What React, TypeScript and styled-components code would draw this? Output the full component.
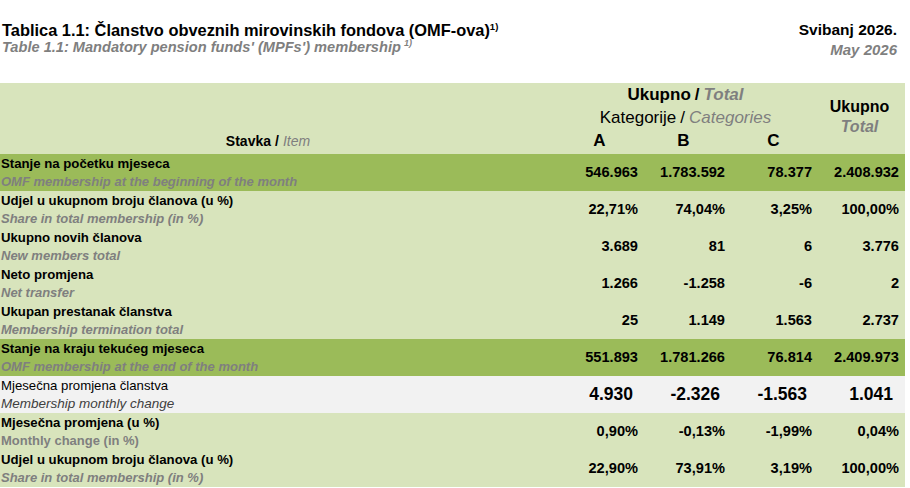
import React from 'react';
import styled, { createGlobalStyle, css } from 'styled-components';

const GlobalStyle = createGlobalStyle`
  html, body {
    margin: 0;
    padding: 0;
    background: #ffffff;
  }
  body {
    font-family: 'Liberation Sans', Arial, sans-serif;
    color: #000;
  }
`;

const LIGHT = '#d8e4bc';
const DARK = '#9bbb59';
const PLAIN = '#f2f2f2';
const GREY = '#7f7f7f';
const COLS = '553px 87px 87px 87px 91px';

const Page = styled.div`
  width: 905px;
  padding-top: 21px;
`;

const TitleBar = styled.div`
  display: flex;
  justify-content: space-between;
  align-items: flex-start;
  padding: 0 8px 0 2px;
  height: 62px;
`;

const TitleBlock = styled.div`
  display: flex;
  flex-direction: column;
`;

const DateBlock = styled.div`
  display: flex;
  flex-direction: column;
  align-items: flex-end;
`;

const MainTitle = styled.div`
  font-size: 16.4px;
  font-weight: bold;
  line-height: 18px;
  sup {
    font-size: 9.5px;
    line-height: 0;
    vertical-align: 6px;
  }
`;

const SubTitle = styled.div`
  font-size: 14.6px;
  font-weight: bold;
  font-style: italic;
  color: ${GREY};
  line-height: 17px;
  sup {
    font-size: 9px;
    line-height: 0;
    vertical-align: 6px;
    margin-left: 3px;
  }
`;

const DateMain = styled.div`
  font-size: 15.5px;
  font-weight: bold;
  line-height: 18px;
`;

const DateSub = styled.div`
  font-size: 15px;
  font-weight: bold;
  font-style: italic;
  color: ${GREY};
  line-height: 20px;
  margin-top: 1px;
`;

const Table = styled.div`
  display: flex;
  flex-direction: column;
`;

const Header = styled.div`
  display: grid;
  grid-template-columns: ${COLS};
  grid-template-rows: 23px 23px 24px;
  height: 71px;
  background: ${LIGHT};
  font-size: 17px;
`;

const GroupTitle = styled.div<{ $bold?: boolean }>`
  grid-column: 2 / 5;
  text-align: center;
  line-height: 23px;
  font-weight: ${({ $bold }) => ($bold ? 'bold' : 'normal')};
  padding-left: 4px;
`;

const TotalHead = styled.div`
  grid-column: 5;
  grid-row: 1 / 4;
  display: flex;
  flex-direction: column;
  justify-content: center;
  align-items: center;
  font-size: 16px;
  font-weight: bold;
  line-height: 20px;
  padding-bottom: 2px;
`;

const ItemHead = styled.div`
  grid-column: 1;
  grid-row: 3;
  text-align: center;
  font-size: 14px;
  font-weight: bold;
  line-height: 24px;
  padding-right: 17px;
`;

const Letter = styled.div<{ $shift: number }>`
  grid-row: 3;
  font-weight: bold;
  text-align: center;
  line-height: 24px;
  padding-left: ${({ $shift }) => $shift}px;
`;

const Muted = styled.span<{ $bold?: boolean }>`
  color: ${GREY};
  font-style: italic;
  font-weight: ${({ $bold }) => ($bold ? 'bold' : 'normal')};
`;

const Slash = styled.span`
  margin: 0 4px;
`;

type Tone = 'dark' | 'light' | 'plain';

const Row = styled.div<{ $tone: Tone }>`
  display: grid;
  grid-template-columns: ${COLS};
  height: 37px;
  background: ${({ $tone }) => ($tone === 'dark' ? DARK : $tone === 'plain' ? PLAIN : LIGHT)};
`;

const LabelCell = styled.div`
  display: flex;
  flex-direction: column;
  padding: 1px 0 0 1px;
`;

const LabelMain = styled.div<{ $plain?: boolean }>`
  font-size: 13.2px;
  line-height: 18px;
  font-weight: ${({ $plain }) => ($plain ? 'normal' : 'bold')};
  white-space: nowrap;
`;

type SubKind = 'italic' | 'upright' | 'light';

const subStyles = {
  italic: css`
    font-style: italic;
    font-weight: bold;
    color: ${GREY};
  `,
  upright: css`
    font-style: normal;
    font-weight: bold;
    color: ${GREY};
  `,
  light: css`
    font-style: italic;
    font-weight: normal;
    color: #404040;
    font-size: 13.5px;
  `,
};

const LabelSub = styled.div<{ $kind: SubKind }>`
  font-size: 13px;
  line-height: 18px;
  white-space: nowrap;
  ${({ $kind }) => subStyles[$kind]}
`;

const NumCell = styled.div<{ $big?: boolean; $last?: boolean }>`
  display: flex;
  align-items: center;
  justify-content: flex-end;
  font-weight: bold;
  white-space: nowrap;
  font-size: ${({ $big }) => ($big ? '17.5px' : '14.6px')};
  padding-right: ${({ $big, $last }) => ($big ? ($last ? 12 : 7) : $last ? 6 : 2)}px;
  padding-bottom: ${({ $big }) => ($big ? 0 : 1)}px;
`;

interface RowData {
  tone: Tone;
  main: string;
  sub: string;
  subKind: SubKind;
  plain?: boolean;
  big?: boolean;
  values: [string, string, string, string];
}

const rows: RowData[] = [
  {
    tone: 'dark',
    main: 'Stanje na početku mjeseca',
    sub: 'OMF membership at the beginning of the month',
    subKind: 'italic',
    values: ['546.963', '1.783.592', '78.377', '2.408.932'],
  },
  {
    tone: 'light',
    main: 'Udjel u ukupnom broju članova (u %)',
    sub: 'Share in total membership (in %)',
    subKind: 'italic',
    values: ['22,71%', '74,04%', '3,25%', '100,00%'],
  },
  {
    tone: 'light',
    main: 'Ukupno novih članova',
    sub: 'New members total',
    subKind: 'italic',
    values: ['3.689', '81', '6', '3.776'],
  },
  {
    tone: 'light',
    main: 'Neto promjena',
    sub: 'Net transfer',
    subKind: 'italic',
    values: ['1.266', '-1.258', '-6', '2'],
  },
  {
    tone: 'light',
    main: 'Ukupan prestanak članstva',
    sub: 'Membership termination total',
    subKind: 'italic',
    values: ['25', '1.149', '1.563', '2.737'],
  },
  {
    tone: 'dark',
    main: 'Stanje na kraju tekućeg mjeseca',
    sub: 'OMF membership at the end of the month',
    subKind: 'italic',
    values: ['551.893', '1.781.266', '76.814', '2.409.973'],
  },
  {
    tone: 'plain',
    main: 'Mjesečna promjena članstva',
    sub: 'Membership monthly change',
    subKind: 'light',
    plain: true,
    big: true,
    values: ['4.930', '-2.326', '-1.563', '1.041'],
  },
  {
    tone: 'light',
    main: 'Mjesečna promjena (u %)',
    sub: 'Monthly change (in %)',
    subKind: 'upright',
    values: ['0,90%', '-0,13%', '-1,99%', '0,04%'],
  },
  {
    tone: 'light',
    main: 'Udjel u ukupnom broju članova (u %)',
    sub: 'Share in total membership (in %)',
    subKind: 'italic',
    values: ['22,90%', '73,91%', '3,19%', '100,00%'],
  },
];

const App: React.FC = () => (
  <>
    <GlobalStyle />
    <Page>
      <TitleBar>
        <TitleBlock>
          <MainTitle>
            Tablica 1.1: Članstvo obveznih mirovinskih fondova (OMF-ova)<sup>1)</sup>
          </MainTitle>
          <SubTitle>
            Table 1.1: Mandatory pension funds' (MPFs') membership<sup>1)</sup>
          </SubTitle>
        </TitleBlock>
        <DateBlock>
          <DateMain>Svibanj 2026.</DateMain>
          <DateSub>May 2026</DateSub>
        </DateBlock>
      </TitleBar>
      <Table>
        <Header>
          <GroupTitle $bold style={{ gridRow: 1 }}>
            Ukupno<Slash>/</Slash>
            <Muted $bold>Total</Muted>
          </GroupTitle>
          <GroupTitle style={{ gridRow: 2 }}>
            Kategorije<Slash>/</Slash>
            <Muted>Categories</Muted>
          </GroupTitle>
          <TotalHead>
            <span>Ukupno</span>
            <Muted $bold>Total</Muted>
          </TotalHead>
          <ItemHead>
            Stavka<Slash>/</Slash>
            <Muted>Item</Muted>
          </ItemHead>
          <Letter $shift={6}>A</Letter>
          <Letter $shift={0}>B</Letter>
          <Letter $shift={6}>C</Letter>
        </Header>
        {rows.map((r, i) => (
          <Row key={i} $tone={r.tone}>
            <LabelCell>
              <LabelMain $plain={r.plain}>{r.main}</LabelMain>
              <LabelSub $kind={r.subKind}>{r.sub}</LabelSub>
            </LabelCell>
            {r.values.map((v, j) => (
              <NumCell key={j} $big={r.big} $last={j === 3}>
                {v}
              </NumCell>
            ))}
          </Row>
        ))}
      </Table>
    </Page>
  </>
);

export default App;
